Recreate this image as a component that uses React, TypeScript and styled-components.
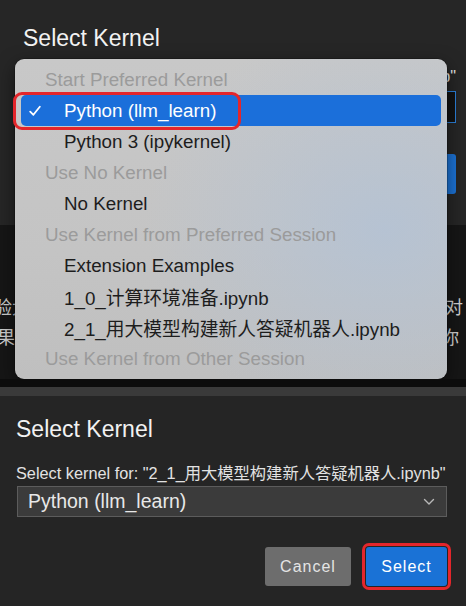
import styled, { createGlobalStyle } from "styled-components";

const Global = createGlobalStyle`
  html, body { margin: 0; padding: 0; background: #252525; }
  body { font-family: "Liberation Sans", "Noto Sans CJK SC", sans-serif; }
`;

type RowKind = "header" | "item" | "selected";

const menu: { kind: RowKind; text: string }[] = [
  { kind: "header", text: "Start Preferred Kernel" },
  { kind: "selected", text: "Python (llm_learn)" },
  { kind: "item", text: "Python 3 (ipykernel)" },
  { kind: "header", text: "Use No Kernel" },
  { kind: "item", text: "No Kernel" },
  { kind: "header", text: "Use Kernel from Preferred Session" },
  { kind: "item", text: "Extension Examples" },
  { kind: "item", text: "1_0_计算环境准备.ipynb" },
  { kind: "item", text: "2_1_用大模型构建新人答疑机器人.ipynb" },
  { kind: "header", text: "Use Kernel from Other Session" },
];

const LABEL = 'Select kernel for: "2_1_用大模型构建新人答疑机器人.ipynb"';

const Screen = styled.div`
  width: 466px;
  height: 606px;
  display: flex;
  flex-direction: column;
  overflow: hidden;
`;

const TopScene = styled.div`
  position: relative;
  height: 379px;
  flex-shrink: 0;
  background: #161616;
  display: flex;
  flex-direction: column;
  overflow: hidden;
`;

const BackDialog = styled.div`
  height: 225px;
  flex-shrink: 0;
  background: #262626;
  padding: 25px 10px 0 23px;
  display: flex;
  flex-direction: column;
  box-sizing: border-box;
`;

const Title = styled.div`
  font-size: 23px;
  line-height: 26px;
  color: #f2f2f2;
`;

const BackLabel = styled.div`
  margin-top: 16px;
  display: flex;
  justify-content: flex-end;
  font-size: 16.3px;
  line-height: 18px;
  color: #e4e4e4;
  white-space: nowrap;
`;

const BackSelect = styled.div`
  margin-top: 6px;
  height: 32px;
  box-sizing: border-box;
  border: 1px solid #2b7fd8;
  background: #121212;
`;

const BackActions = styled.div`
  margin-top: 31px;
  display: flex;
  justify-content: flex-end;
`;

const BackButton = styled.div`
  width: 82px;
  height: 40px;
  border-radius: 3px;
  background: #1c72d4;
`;

const PageText = styled.div`
  padding-top: 68px;
  display: flex;
  flex-direction: column;
`;

const PageLine = styled.div`
  display: flex;
  justify-content: space-between;
  font-size: 18px;
  line-height: 30px;
  color: #cfcfcf;
  white-space: nowrap;
`;

const Clip = styled.span<{ $shift: number }>`
  margin-left: ${(p) => p.$shift}px;
  margin-right: ${(p) => -p.$shift}px;
`;

const Menu = styled.div`
  position: absolute;
  top: 59px;
  left: 15px;
  width: 432px;
  height: 320px;
  box-sizing: border-box;
  padding: 5px 0;
  border-radius: 9px;
  background:
    radial-gradient(ellipse 240px 210px at 370px 170px, rgba(178, 194, 214, 0.8), rgba(178, 194, 214, 0) 100%),
    linear-gradient(180deg, #c8c8c8 0%, #c4c4c4 60%, #bfbfbf 100%);
  box-shadow: 0 6px 18px rgba(0, 0, 0, 0.5), 0 0 0 0.5px rgba(0, 0, 0, 0.4);
  display: flex;
  flex-direction: column;
`;

const Row = styled.div<{ $kind: RowKind }>`
  height: 31px;
  margin: 0 6px;
  border-radius: 5px;
  display: flex;
  align-items: center;
  font-size: 18.8px;
  white-space: nowrap;
  padding-left: ${(p) => (p.$kind === "header" ? 24 : 0)}px;
  color: ${(p) =>
    p.$kind === "header" ? "#9b9b9b" : p.$kind === "selected" ? "#ffffff" : "#1d1d1d"};
  background: ${(p) => (p.$kind === "selected" ? "#1b6fda" : "transparent")};
`;

const CheckSlot = styled.span`
  width: 43px;
  flex-shrink: 0;
  display: flex;
  align-items: center;
  padding-left: 8px;
  box-sizing: border-box;
`;

const Ring = styled.div`
  position: absolute;
  top: 92px;
  left: 13px;
  width: 228px;
  height: 38px;
  box-sizing: border-box;
  border: 3px solid #e4262b;
  border-radius: 9px;
`;

const Band = styled.div<{ $h: number; $c: string }>`
  height: ${(p) => p.$h}px;
  flex-shrink: 0;
  background: ${(p) => p.$c};
`;

const Dialog = styled.div`
  flex: 1;
  background: #252525;
  padding: 20px 19px 0 16px;
  display: flex;
  flex-direction: column;
`;

const Label = styled.div`
  margin-top: 22px;
  font-size: 16.3px;
  line-height: 18px;
  color: #e2e2e2;
  white-space: nowrap;
`;

const SelectBox = styled.div`
  margin-top: 4px;
  margin-left: 1px;
  height: 31px;
  box-sizing: border-box;
  border: 1px solid #5c5c5c;
  background: #3b3b3b;
  display: flex;
  align-items: center;
  justify-content: space-between;
  padding: 0 11px 0 10px;
  font-size: 19.5px;
  color: #e8e8e8;
`;

const Actions = styled.div`
  margin-top: 30px;
  display: flex;
  justify-content: flex-end;
  gap: 15px;
`;

const Button = styled.button<{ $primary?: boolean; $ring?: boolean }>`
  height: 39px;
  padding: 0;
  border: none;
  border-radius: 3px;
  font-family: inherit;
  font-size: 16px;
  letter-spacing: 1px;
  width: ${(p) => (p.$primary ? 81 : 86)}px;
  color: ${(p) => (p.$primary ? "#ffffff" : "#e4e4e4")};
  background: ${(p) => (p.$primary ? "#1a72d6" : "#6d6d6d")};
  box-shadow: ${(p) => (p.$ring ? "0 0 0 1px #252525, 0 0 0 4px #e4262b" : "none")};
`;

const Check = () => (
  <svg width="12" height="12" viewBox="0 0 12 12">
    <path d="M1.2 6.6 L4.4 9.8 L10.8 1.8" fill="none" stroke="#fff" strokeWidth="1.8" strokeLinecap="round" strokeLinejoin="round" />
  </svg>
);

const Chevron = () => (
  <svg width="12" height="8" viewBox="0 0 12 8">
    <path d="M1.5 1.5 L6 6 L10.5 1.5" fill="none" stroke="#b8b8b8" strokeWidth="1.4" strokeLinecap="round" strokeLinejoin="round" />
  </svg>
);

export default function App() {
  return (
    <Screen>
      <Global />
      <TopScene>
        <BackDialog>
          <Title>Select Kernel</Title>
          <BackLabel>{LABEL}</BackLabel>
          <BackSelect />
          <BackActions>
            <BackButton />
          </BackActions>
        </BackDialog>
        <PageText>
          <PageLine>
            <Clip $shift={-6}>验大</Clip>
            <Clip $shift={-3}>它对</Clip>
          </PageLine>
          <PageLine>
            <Clip $shift={-3}>果广</Clip>
            <Clip $shift={-7}>你</Clip>
          </PageLine>
        </PageText>
        <Menu>
          {menu.map((m, i) => (
            <Row key={i} $kind={m.kind}>
              {m.kind !== "header" && <CheckSlot>{m.kind === "selected" && <Check />}</CheckSlot>}
              {m.text}
            </Row>
          ))}
        </Menu>
        <Ring />
      </TopScene>
      <Band $h={8} $c="#0c0c0c" />
      <Band $h={9} $c="#3a3a3a" />
      <Dialog>
        <Title>Select Kernel</Title>
        <Label>{LABEL}</Label>
        <SelectBox>
          <span>Python (llm_learn)</span>
          <Chevron />
        </SelectBox>
        <Actions>
          <Button>Cancel</Button>
          <Button $primary $ring>Select</Button>
        </Actions>
      </Dialog>
    </Screen>
  );
}
